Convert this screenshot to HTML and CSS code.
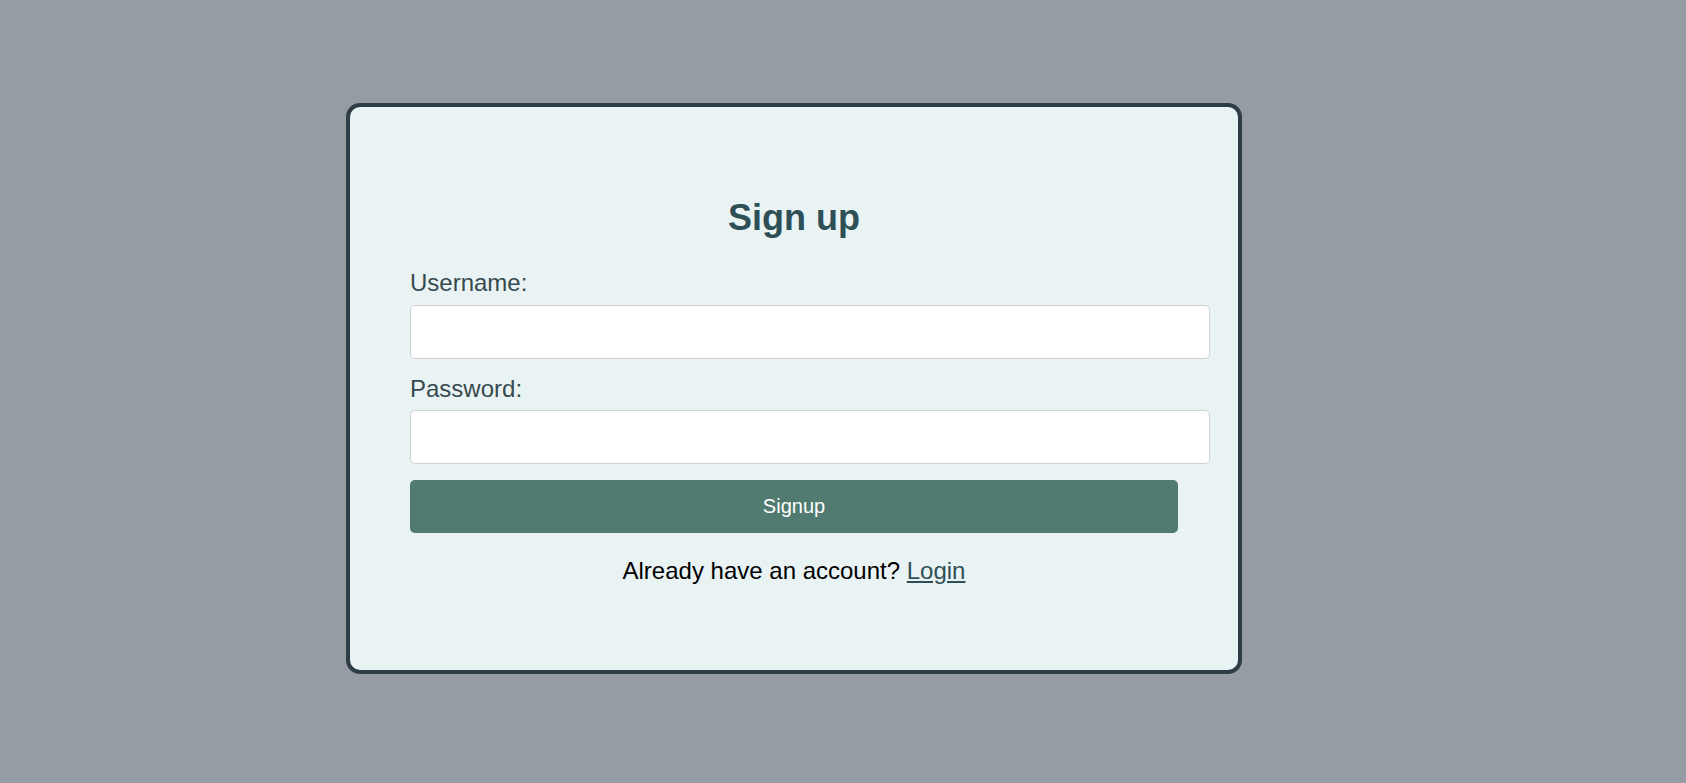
FILE: index.html
```html
<!DOCTYPE html>
<html lang="en">
<head>
<meta charset="utf-8">
<title>Sign up</title>
<link rel="stylesheet" href="styles.css">
</head>
<body>
  <div class="page">
    <div class="card">
      <h2 class="title">Sign up</h2>
      <form class="form">
        <label class="label" for="username">Username:</label>
        <input class="field" type="text" id="username">
        <label class="label" for="password">Password:</label>
        <input class="field" type="password" id="password">
        <button class="btn" type="button">Signup</button>
      </form>
      <p class="footer">Already have an account? <a class="link" href="#">Login</a></p>
    </div>
  </div>
</body>
</html>
```
FILE: styles.css
```css
html, body {
  margin: 0;
  padding: 0;
  height: 100%;
}
body {
  background: #959ca4;
  font-family: "Liberation Sans", Arial, sans-serif;
}
.page {
  padding: 103px 0 0 346px;
}
.card {
  box-sizing: border-box;
  width: 896px;
  background: #e9f3f4;
  border: 4px solid #2f3e46;
  border-radius: 14px;
  padding: 90px 60px 85px;
}
.title {
  margin: 0 0 31px;
  font-size: 36px;
  line-height: 41px;
  font-weight: bold;
  color: #2f4f57;
  text-align: center;
}
.form {
  display: flex;
  flex-direction: column;
  margin: 0;
}
.label {
  display: block;
  font-size: 24px;
  line-height: 28px;
  color: #354a4e;
  margin-bottom: 7.5px;
}
.field {
  box-sizing: border-box;
  width: calc(100% + 32px);
  height: 54px;
  margin: 0 0 16px;
  padding: 0 15px;
  border: 1px solid #cfd3d6;
  border-radius: 5px;
  background: #ffffff;
  font-size: 18px;
  font-family: inherit;
}
.btn {
  box-sizing: border-box;
  width: 100%;
  height: 53px;
  margin: 0;
  border: none;
  border-radius: 5px;
  background: #517a70;
  color: #ffffff;
  font-family: inherit;
  font-size: 20px;
  cursor: pointer;
}
.footer {
  margin: 24px 0 0;
  font-size: 24px;
  line-height: 28px;
  color: #000000;
  text-align: center;
}
.link {
  color: #2f4f57;
  text-decoration: underline;
}
```
